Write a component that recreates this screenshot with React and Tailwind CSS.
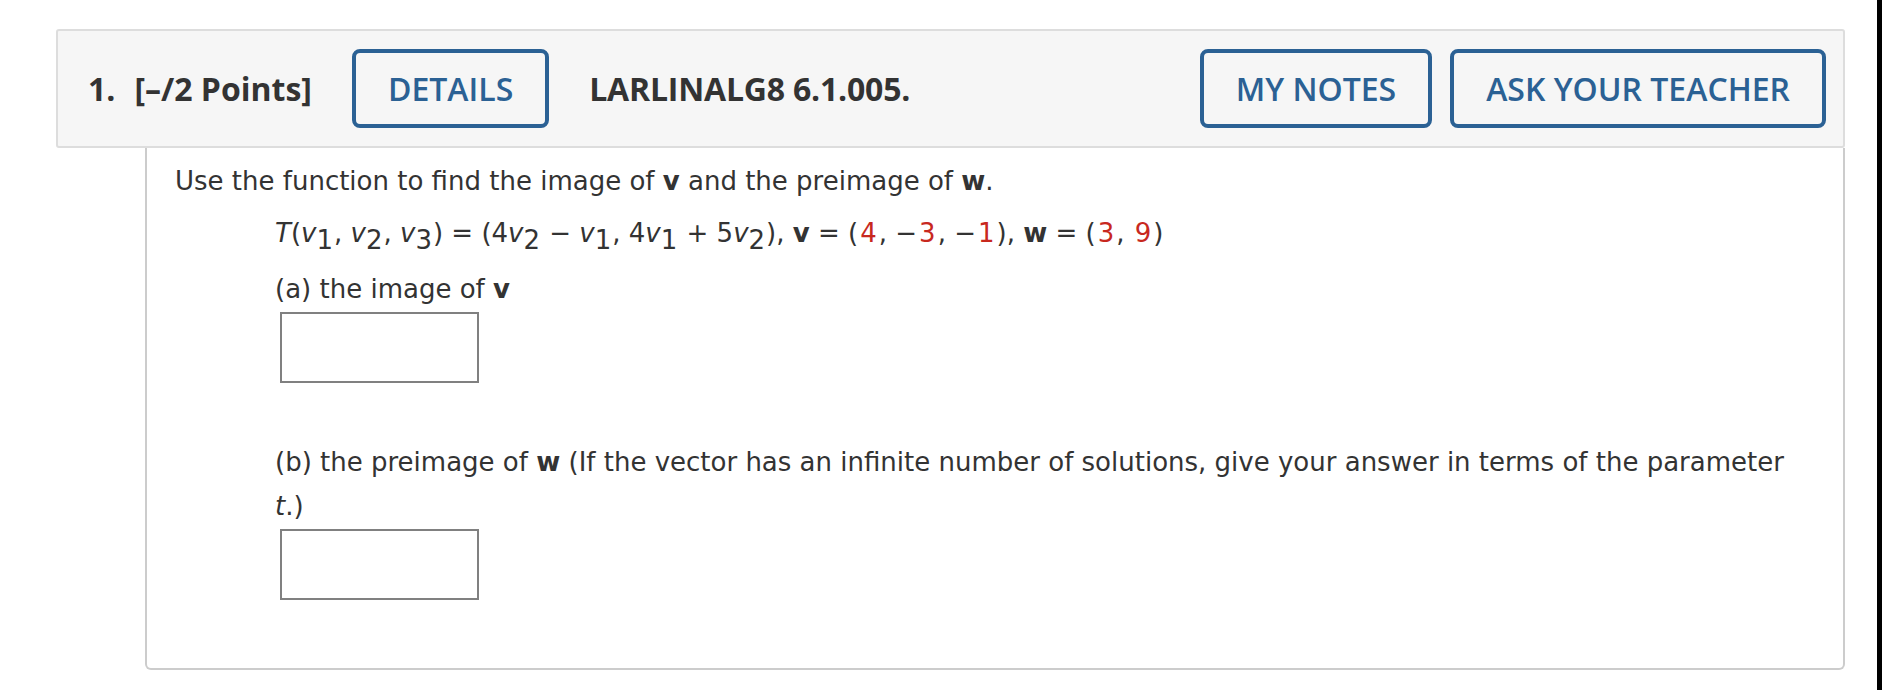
import React from 'react';

const Red = ({ children }) => <span className="mx-[2px] text-[#c8281e]">{children}</span>;

const V = ({ n }) => (
  <>
    <i>v</i>
    <sub className="pr-[1px] text-[100%]">{n}</sub>
  </>
);

const HeaderButton = ({ children }) => (
  <button className="flex h-[79px] items-center rounded-[8px] border-4 border-[#2b6194] px-[32px] text-[32px] font-semibold text-[#2b6194]">
    {children}
  </button>
);

const AnswerBox = () => <div className="h-[71px] w-[199px] border-2 border-[#808080] bg-white" />;

export default function App() {
  return (
    <div className="flex h-[690px] w-[1882px] bg-white">
      <div className="flex-1 pl-[56px] pr-[32px] pt-[29px]">
        {/* question header */}
        <div
          className="flex h-[119px] items-center rounded-[3px] border-2 border-[#dddddd] bg-[#f6f6f6] pl-[30px] pr-[17px] text-[#333333]"
          style={{ fontFamily: '"Open Sans", sans-serif' }}
        >
          <span className="text-[32px] font-bold">1.</span>
          <span className="ml-[19px] text-[32px] font-bold">[–/2 Points]</span>
          <div className="ml-[40px]">
            <HeaderButton>DETAILS</HeaderButton>
          </div>
          <span className="ml-[40px] text-[32px] font-bold tracking-[-0.2px]">LARLINALG8 6.1.005.</span>
          <div className="ml-auto flex gap-[18px]">
            <HeaderButton>MY NOTES</HeaderButton>
            <HeaderButton>ASK YOUR TEACHER</HeaderButton>
          </div>
        </div>

        {/* question body */}
        <div
          className="ml-[89px] h-[522px] rounded-b-[6px] border-2 border-t-0 border-[#cccccc] pl-[28px] pt-[14px] text-[26px] leading-[39px] text-[#333333]"
          style={{ fontFamily: '"DejaVu Sans", Verdana, sans-serif' }}
        >
          <p>
            Use the function to find the image of <b>v</b> and the preimage of <b>w</b>.
          </p>
          <div className="mt-[13px] pl-[100px]">
            <p className="whitespace-nowrap">
              <i>T</i>(<V n="1" />, <V n="2" />, <V n="3" />) = (4<V n="2" /> − <V n="1" />, 4<V n="1" /> + 5
              <V n="2" />), <b>v</b> = (<Red>4</Red>, −<Red>3</Red>, −<Red>1</Red>), <b>w</b> = (<Red>3</Red>,{' '}
              <Red>9</Red>)
            </p>
            <p className="mt-[17px]">
              (a) the image of <b>v</b>
            </p>
            <div className="ml-[5px] mt-[3px]">
              <AnswerBox />
            </div>
            <p className="mt-[57px] leading-[44px]">
              (b) the preimage of <b>w</b> (If the vector has an infinite number of solutions, give your answer in
              terms of the parameter
              <br />
              <i>t</i>.)
            </p>
            <div className="ml-[5px] mt-[1px]">
              <AnswerBox />
            </div>
          </div>
        </div>
      </div>
      <div className="w-[5px] bg-black" />
    </div>
  );
}
